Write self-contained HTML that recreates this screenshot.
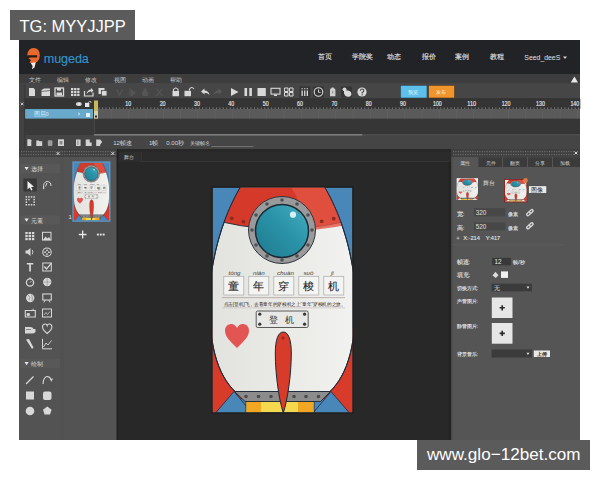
<!DOCTYPE html>
<html><head><meta charset="utf-8">
<style>
*{margin:0;padding:0;box-sizing:border-box}
html,body{width:600px;height:480px;overflow:hidden;background:#fff;font-family:"Liberation Sans",sans-serif}
svg{position:absolute;left:0;top:0}
svg text{font-family:"Liberation Sans",sans-serif}
.lbl{position:absolute;background:#5b5b5b;color:#fff;font-size:16.5px;line-height:30px;white-space:nowrap}
</style></head><body>
<svg width="600" height="480" viewBox="0 0 600 480">
<rect x="19" y="40" width="561" height="400" fill="#262626" />
<rect x="19" y="40" width="561" height="34" fill="#212327" />
<rect x="19" y="74" width="561" height="10" fill="#3d3d3d" />
<rect x="19" y="84" width="561" height="14.5" fill="#464646" />
<rect x="19" y="99" width="561" height="36" fill="#3a3a3a" />
<rect x="25" y="99" width="555" height="10" fill="#363636" />
<rect x="25" y="109" width="68" height="9.5" fill="#5ea0c4" />
<rect x="98" y="109" width="482" height="9.5" fill="#5a5a5a" />
<rect x="19" y="135" width="561" height="14" fill="#454545" />
<rect x="19" y="149" width="98" height="8" fill="#3d3d3d" />
<rect x="451" y="149" width="129" height="8" fill="#3d3d3d" />
<rect x="19" y="157" width="98" height="283" fill="#535353" />
<rect x="60" y="157" width="4" height="283" fill="#515151" />
<rect x="451" y="157" width="129" height="283" fill="#555555" />
<path d="M27.3 56 Q27.5 48 33.6 48 Q39.8 48 39.8 55.5 Q39.8 59 37.5 61.5 Q35.5 63.5 32 63.5 L29.5 62.5 L31 60 L28.5 58.5 L30 57.2 Z" fill="#e8692c"/>
<path d="M27.3 55.2 L37.2 55.2 Q37.6 56.3 36.8 57.4 L27.8 57.4 Z" fill="#2a1a14"/>
<path d="M30.8 63 L35.8 62.2 L34.5 67.5 L32 69.3 L32.6 66 Z" fill="#f2ebe6"/>
<text x="43.8" y="62.6" font-size="12.6" fill="#3493c9" stroke="#3493c9" stroke-width="0.15" textLength="45" lengthAdjust="spacing">mugeda</text>
<text x="318.3" y="59.4" font-size="7" fill="#e2e2e2" stroke="#e2e2e2" stroke-width="0.12">首页</text>
<text x="352.4" y="59.4" font-size="7" fill="#e2e2e2" stroke="#e2e2e2" stroke-width="0.12">学院奖</text>
<text x="387.2" y="59.4" font-size="7" fill="#e2e2e2" stroke="#e2e2e2" stroke-width="0.12">动态</text>
<text x="422" y="59.4" font-size="7" fill="#e2e2e2" stroke="#e2e2e2" stroke-width="0.12">报价</text>
<text x="454.8" y="59.4" font-size="7" fill="#e2e2e2" stroke="#e2e2e2" stroke-width="0.12">案例</text>
<text x="489.6" y="59.4" font-size="7" fill="#e2e2e2" stroke="#e2e2e2" stroke-width="0.12">教程</text>
<text x="524.3" y="59.8" font-size="7.6" fill="#e2e2e2" textLength="36" lengthAdjust="spacingAndGlyphs">Seed_deeS</text>
<path d="M563 56.5 L567 56.5 L565 59 Z" fill="#d6d6d6"/>
<text x="28.5" y="81.5" font-size="6.3" fill="#c8c8c8" >文件</text>
<text x="56.8" y="81.5" font-size="6.3" fill="#c8c8c8" >编辑</text>
<text x="85" y="81.5" font-size="6.3" fill="#c8c8c8" >修改</text>
<text x="113.5" y="81.5" font-size="6.3" fill="#c8c8c8" >视图</text>
<text x="141.8" y="81.5" font-size="6.3" fill="#c8c8c8" >动画</text>
<text x="169.6" y="81.5" font-size="6.3" fill="#c8c8c8" >帮助</text>
<path d="M570.8 82.4 L578 82.4 L574.4 76.6 Z" fill="#e8e8e8"/>
<rect x="19" y="83.5" width="561" height="0.7" fill="#4e4e4e" />
<path d="M29 88 L33.5 88 L35 89.5 L35 96 L29 96 Z" fill="#d9d9d9"/>
<path d="M41.5 90 L44 88.5 L50 88.5 L50 96 L41.5 96 Z" fill="#d9d9d9"/><path d="M41.5 91.5 L50 90.5" stroke="#464646" stroke-width="0.7"/>
<rect x="55" y="88" width="8.5" height="8" fill="none" stroke="#d9d9d9" stroke-width="1.3"/><rect x="57" y="88" width="4" height="2.6" fill="#d9d9d9"/><rect x="56.5" y="92.5" width="5.5" height="3" fill="#d9d9d9"/>
<rect x="71.0" y="88.0" width="2.3" height="2.2" fill="#d9d9d9" />
<rect x="71.0" y="90.9" width="2.3" height="2.2" fill="#d9d9d9" />
<rect x="71.0" y="93.8" width="2.3" height="2.2" fill="#d9d9d9" />
<rect x="74.1" y="88.0" width="2.3" height="2.2" fill="#d9d9d9" />
<rect x="74.1" y="90.9" width="2.3" height="2.2" fill="#d9d9d9" />
<rect x="74.1" y="93.8" width="2.3" height="2.2" fill="#d9d9d9" />
<rect x="77.2" y="88.0" width="2.3" height="2.2" fill="#d9d9d9" />
<rect x="77.2" y="90.9" width="2.3" height="2.2" fill="#d9d9d9" />
<rect x="77.2" y="93.8" width="2.3" height="2.2" fill="#d9d9d9" />
<path d="M84.5 91 L84.5 96 L93 96 L93 92.5" fill="none" stroke="#d9d9d9" stroke-width="1.2"/><path d="M86.5 94 Q87.5 89.5 91 89.5 L91 88 L93.5 90.5 L91 92.8 L91 91.3 Q88.5 91.5 86.5 94 Z" fill="#d9d9d9"/>
<rect x="98.5" y="88" width="6" height="6" fill="#d9d9d9"/><rect x="101.5" y="90.5" width="5.5" height="5.5" fill="#d9d9d9" stroke="#464646" stroke-width="0.8"/>
<path d="M116.5 89 L119.5 95.5 L122.5 89" stroke="#555555" stroke-width="1.2" fill="none"/>
<path d="M130 88 V96 M131.5 90 L135.5 93 L131.5 96 Z" stroke="#555555" stroke-width="1" fill="#555555"/>
<path d="M143.5 88.5 h3 v2 l1.5 2 v3.5 h-6 v-3.5 l1.5 -2 Z" fill="#555555"/>
<path d="M156.5 88.5 L162.5 96 M162.5 88.5 L156.5 96" stroke="#555555" stroke-width="1.2"/>
<path d="M173.5 91 L173.5 89.5 Q175.8 86.5 178 89.5 L178 91" fill="none" stroke="#d9d9d9" stroke-width="1.1"/><rect x="172.5" y="91" width="6.5" height="5.2" fill="#d9d9d9"/>
<path d="M189.5 90.5 L189.5 89 Q191.7 86 194 89" fill="none" stroke="#d9d9d9" stroke-width="1.1"/><rect x="184.5" y="90.8" width="6.5" height="5.4" fill="#d9d9d9"/>
<path d="M201 91.5 L204.5 88.5 L204.5 90.5 Q208.5 90.5 209.5 95 Q207.5 92.8 204.5 92.8 L204.5 94.6 Z" fill="#d9d9d9"/>
<path d="M222 91.5 L218.5 88.5 L218.5 90.5 Q214.5 90.5 213.5 95 Q215.5 92.8 218.5 92.8 L218.5 94.6 Z" fill="#5a5a5a"/>
<path d="M231 88 L238.5 92 L231 96 Z" fill="#d9d9d9"/>
<rect x="244.5" y="88" width="2.6" height="8" fill="#d9d9d9" />
<rect x="249.3" y="88" width="2.6" height="8" fill="#d9d9d9" />
<rect x="257.5" y="88" width="8.3" height="8" fill="#d9d9d9" />
<rect x="271" y="88.3" width="9" height="5.8" fill="none" stroke="#d9d9d9" stroke-width="1.1"/><rect x="274" y="94.6" width="3" height="1.4" fill="#d9d9d9"/>
<path d="M284.5 88 h3.5 v3.5 h-3.5 Z M289.5 88 h3.5 v3.5 h-3.5 Z M284.5 92.5 h3.5 v3.5 h-3.5 Z M289.5 92.5 h3.5 v3.5 h-3.5 Z" fill="none" stroke="#d9d9d9" stroke-width="1"/>
<rect x="299.5" y="86.5" width="11" height="11" fill="#353535" />
<rect x="313" y="86.5" width="11" height="11" fill="#353535" />
<rect x="341" y="86.5" width="11" height="11" fill="#353535" />
<rect x="301.5" y="90.5" width="1.3" height="5.5" fill="#d9d9d9" />
<rect x="301.5" y="88.2" width="1.3" height="1.1" fill="#d9d9d9" />
<rect x="304.1" y="90.5" width="1.3" height="5.5" fill="#d9d9d9" />
<rect x="304.1" y="88.2" width="1.3" height="1.1" fill="#d9d9d9" />
<rect x="306.7" y="90.5" width="1.3" height="5.5" fill="#d9d9d9" />
<rect x="306.7" y="88.2" width="1.3" height="1.1" fill="#d9d9d9" />
<circle cx="318.5" cy="92" r="4.3" fill="none" stroke="#d9d9d9" stroke-width="1.1"/><path d="M318.5 89.5 V92.3 H320.7" fill="none" stroke="#d9d9d9" stroke-width="0.9"/>
<path d="M330 90 Q330 88.6 331.4 88.3 L331.6 87.4 L333.6 87.4 L333.8 88.3 Q335.4 88.6 335.4 90 L335.4 96.3 L330 96.3 Z" fill="#cfcfcf"/><rect x="332.2" y="91" width="1" height="2.5" fill="#888"/>
<circle cx="344.5" cy="89.3" r="1.9" fill="#d9d9d9"/><path d="M344 91 Q346 89.5 349 90.8 Q352 92.3 351.3 95 Q350.3 97.2 347.5 96.8 Q344.8 96.3 344 93.5 Z" fill="#d9d9d9"/>
<circle cx="362" cy="92" r="4.6" fill="#d9d9d9"/><path d="M360.3 90.8 Q360.5 89 362 89 Q363.8 89 363.7 90.8 Q363.5 91.8 362.2 92.5 L362.2 93.5" fill="none" stroke="#464646" stroke-width="1.1"/><rect x="361.6" y="94.2" width="1.2" height="1.2" fill="#464646"/>
<rect x="400.5" y="85.3" width="26.5" height="12.7" fill="#5cc0ea" stroke="#2c3e4c" stroke-width="0.6"/>
<rect x="428.6" y="85.3" width="26" height="12.7" fill="#f0952c" stroke="#4a3420" stroke-width="0.6"/>
<text x="408.3" y="94" font-size="5.2" fill="#e8f6fc" >预览</text>
<text x="436.3" y="94" font-size="5.2" fill="#fdeede" >发布</text>
<rect x="19" y="84" width="5.5" height="65" fill="#424242" />
<rect x="24.5" y="84" width="0.8" height="65" fill="#333333" />
<path d="M20.8 102.6 L23.4 105.2 M23.4 102.6 L20.8 105.2" stroke="#e0e0e0" stroke-width="0.9"/>
<rect x="25.3" y="99" width="555" height="10" fill="#343434" />
<ellipse cx="78.8" cy="104" rx="3" ry="2.1" fill="#c8c8c8"/><ellipse cx="79.2" cy="104" rx="1.4" ry="1.3" fill="#e8e8e8"/>
<rect x="85" y="102.8" width="4.3" height="4.2" fill="#e6e6e6"/><path d="M88.6 102.8 V102 Q89.8 100.6 91 101.8 V103" fill="none" stroke="#cfcfcf" stroke-width="0.8"/>
<rect x="25.3" y="118.5" width="68.7" height="16.5" fill="#393939" />
<rect x="94" y="118.5" width="486" height="16.5" fill="#363636" />
<rect x="94" y="118.5" width="0.8" height="16.5" fill="#4a4a4a" />
<rect x="94" y="134" width="268.5" height="1.6" fill="#7c7c7c" />
<rect x="362.5" y="134" width="217.5" height="1.6" fill="#4c4c4c" />
<rect x="25.3" y="109.5" width="67.7" height="9" fill="#68a9cc" />
<text x="33.5" y="116" font-size="5.6" fill="#dcecf5" >图层0</text>
<path d="M78 112.8 L80 114 L78 115.2" fill="none" stroke="#cfe6f2" stroke-width="0.8"/>
<rect x="86" y="113" width="4" height="4" fill="#e4f2fa" />
<rect x="98" y="109" width="482" height="9.5" fill="#5a5a5a" />
<rect x="111.25" y="109" width="0.6" height="9.5" fill="#646464" />
<rect x="128.5" y="109" width="0.6" height="9.5" fill="#646464" />
<rect x="145.75" y="109" width="0.6" height="9.5" fill="#646464" />
<rect x="163.0" y="109" width="0.6" height="9.5" fill="#646464" />
<rect x="180.25" y="109" width="0.6" height="9.5" fill="#646464" />
<rect x="197.5" y="109" width="0.6" height="9.5" fill="#646464" />
<rect x="214.75" y="109" width="0.6" height="9.5" fill="#646464" />
<rect x="232.0" y="109" width="0.6" height="9.5" fill="#646464" />
<rect x="249.25" y="109" width="0.6" height="9.5" fill="#646464" />
<rect x="266.5" y="109" width="0.6" height="9.5" fill="#646464" />
<rect x="283.75" y="109" width="0.6" height="9.5" fill="#646464" />
<rect x="301.0" y="109" width="0.6" height="9.5" fill="#646464" />
<rect x="318.25" y="109" width="0.6" height="9.5" fill="#646464" />
<rect x="335.5" y="109" width="0.6" height="9.5" fill="#646464" />
<rect x="352.75" y="109" width="0.6" height="9.5" fill="#646464" />
<rect x="370.0" y="109" width="0.6" height="9.5" fill="#646464" />
<rect x="387.25" y="109" width="0.6" height="9.5" fill="#646464" />
<rect x="404.5" y="109" width="0.6" height="9.5" fill="#646464" />
<rect x="421.75" y="109" width="0.6" height="9.5" fill="#646464" />
<rect x="439.0" y="109" width="0.6" height="9.5" fill="#646464" />
<rect x="456.25" y="109" width="0.6" height="9.5" fill="#646464" />
<rect x="473.5" y="109" width="0.6" height="9.5" fill="#646464" />
<rect x="490.75" y="109" width="0.6" height="9.5" fill="#646464" />
<rect x="508.0" y="109" width="0.6" height="9.5" fill="#646464" />
<rect x="525.25" y="109" width="0.6" height="9.5" fill="#646464" />
<rect x="542.5" y="109" width="0.6" height="9.5" fill="#646464" />
<rect x="559.75" y="109" width="0.6" height="9.5" fill="#646464" />
<rect x="577.0" y="109" width="0.6" height="9.5" fill="#646464" />
<rect x="95.2" y="107.6" width="1" height="1.1" fill="#9a9a9a" />
<rect x="98.65" y="107.6" width="1" height="1.1" fill="#9a9a9a" />
<rect x="102.1" y="107.6" width="1" height="1.1" fill="#9a9a9a" />
<rect x="105.55" y="107.6" width="1" height="1.1" fill="#9a9a9a" />
<rect x="109.0" y="107.6" width="1" height="1.1" fill="#9a9a9a" />
<rect x="112.45" y="107.6" width="1" height="1.1" fill="#9a9a9a" />
<rect x="115.9" y="107.6" width="1" height="1.1" fill="#9a9a9a" />
<rect x="119.35" y="107.6" width="1" height="1.1" fill="#9a9a9a" />
<rect x="122.8" y="107.6" width="1" height="1.1" fill="#9a9a9a" />
<rect x="126.25" y="107.6" width="1" height="1.1" fill="#9a9a9a" />
<rect x="129.7" y="107.6" width="1" height="1.1" fill="#9a9a9a" />
<rect x="133.15" y="107.6" width="1" height="1.1" fill="#9a9a9a" />
<rect x="136.6" y="107.6" width="1" height="1.1" fill="#9a9a9a" />
<rect x="140.05" y="107.6" width="1" height="1.1" fill="#9a9a9a" />
<rect x="143.5" y="107.6" width="1" height="1.1" fill="#9a9a9a" />
<rect x="146.95" y="107.6" width="1" height="1.1" fill="#9a9a9a" />
<rect x="150.4" y="107.6" width="1" height="1.1" fill="#9a9a9a" />
<rect x="153.85" y="107.6" width="1" height="1.1" fill="#9a9a9a" />
<rect x="157.3" y="107.6" width="1" height="1.1" fill="#9a9a9a" />
<rect x="160.75" y="107.6" width="1" height="1.1" fill="#9a9a9a" />
<rect x="164.2" y="107.6" width="1" height="1.1" fill="#9a9a9a" />
<rect x="167.65" y="107.6" width="1" height="1.1" fill="#9a9a9a" />
<rect x="171.1" y="107.6" width="1" height="1.1" fill="#9a9a9a" />
<rect x="174.55" y="107.6" width="1" height="1.1" fill="#9a9a9a" />
<rect x="178.0" y="107.6" width="1" height="1.1" fill="#9a9a9a" />
<rect x="181.45" y="107.6" width="1" height="1.1" fill="#9a9a9a" />
<rect x="184.9" y="107.6" width="1" height="1.1" fill="#9a9a9a" />
<rect x="188.35" y="107.6" width="1" height="1.1" fill="#9a9a9a" />
<rect x="191.8" y="107.6" width="1" height="1.1" fill="#9a9a9a" />
<rect x="195.25" y="107.6" width="1" height="1.1" fill="#9a9a9a" />
<rect x="198.7" y="107.6" width="1" height="1.1" fill="#9a9a9a" />
<rect x="202.15" y="107.6" width="1" height="1.1" fill="#9a9a9a" />
<rect x="205.6" y="107.6" width="1" height="1.1" fill="#9a9a9a" />
<rect x="209.05" y="107.6" width="1" height="1.1" fill="#9a9a9a" />
<rect x="212.5" y="107.6" width="1" height="1.1" fill="#9a9a9a" />
<rect x="215.95" y="107.6" width="1" height="1.1" fill="#9a9a9a" />
<rect x="219.4" y="107.6" width="1" height="1.1" fill="#9a9a9a" />
<rect x="222.85" y="107.6" width="1" height="1.1" fill="#9a9a9a" />
<rect x="226.3" y="107.6" width="1" height="1.1" fill="#9a9a9a" />
<rect x="229.75" y="107.6" width="1" height="1.1" fill="#9a9a9a" />
<rect x="233.2" y="107.6" width="1" height="1.1" fill="#9a9a9a" />
<rect x="236.65" y="107.6" width="1" height="1.1" fill="#9a9a9a" />
<rect x="240.1" y="107.6" width="1" height="1.1" fill="#9a9a9a" />
<rect x="243.55" y="107.6" width="1" height="1.1" fill="#9a9a9a" />
<rect x="247.0" y="107.6" width="1" height="1.1" fill="#9a9a9a" />
<rect x="250.45" y="107.6" width="1" height="1.1" fill="#9a9a9a" />
<rect x="253.9" y="107.6" width="1" height="1.1" fill="#9a9a9a" />
<rect x="257.35" y="107.6" width="1" height="1.1" fill="#9a9a9a" />
<rect x="260.8" y="107.6" width="1" height="1.1" fill="#9a9a9a" />
<rect x="264.25" y="107.6" width="1" height="1.1" fill="#9a9a9a" />
<rect x="267.7" y="107.6" width="1" height="1.1" fill="#9a9a9a" />
<rect x="271.15" y="107.6" width="1" height="1.1" fill="#9a9a9a" />
<rect x="274.6" y="107.6" width="1" height="1.1" fill="#9a9a9a" />
<rect x="278.05" y="107.6" width="1" height="1.1" fill="#9a9a9a" />
<rect x="281.5" y="107.6" width="1" height="1.1" fill="#9a9a9a" />
<rect x="284.95" y="107.6" width="1" height="1.1" fill="#9a9a9a" />
<rect x="288.4" y="107.6" width="1" height="1.1" fill="#9a9a9a" />
<rect x="291.85" y="107.6" width="1" height="1.1" fill="#9a9a9a" />
<rect x="295.3" y="107.6" width="1" height="1.1" fill="#9a9a9a" />
<rect x="298.75" y="107.6" width="1" height="1.1" fill="#9a9a9a" />
<rect x="302.2" y="107.6" width="1" height="1.1" fill="#9a9a9a" />
<rect x="305.65" y="107.6" width="1" height="1.1" fill="#9a9a9a" />
<rect x="309.1" y="107.6" width="1" height="1.1" fill="#9a9a9a" />
<rect x="312.55" y="107.6" width="1" height="1.1" fill="#9a9a9a" />
<rect x="316.0" y="107.6" width="1" height="1.1" fill="#9a9a9a" />
<rect x="319.45" y="107.6" width="1" height="1.1" fill="#9a9a9a" />
<rect x="322.9" y="107.6" width="1" height="1.1" fill="#9a9a9a" />
<rect x="326.35" y="107.6" width="1" height="1.1" fill="#9a9a9a" />
<rect x="329.8" y="107.6" width="1" height="1.1" fill="#9a9a9a" />
<rect x="333.25" y="107.6" width="1" height="1.1" fill="#9a9a9a" />
<rect x="336.7" y="107.6" width="1" height="1.1" fill="#9a9a9a" />
<rect x="340.15" y="107.6" width="1" height="1.1" fill="#9a9a9a" />
<rect x="343.6" y="107.6" width="1" height="1.1" fill="#9a9a9a" />
<rect x="347.05" y="107.6" width="1" height="1.1" fill="#9a9a9a" />
<rect x="350.5" y="107.6" width="1" height="1.1" fill="#9a9a9a" />
<rect x="353.95" y="107.6" width="1" height="1.1" fill="#9a9a9a" />
<rect x="357.4" y="107.6" width="1" height="1.1" fill="#9a9a9a" />
<rect x="360.85" y="107.6" width="1" height="1.1" fill="#9a9a9a" />
<rect x="364.3" y="107.6" width="1" height="1.1" fill="#9a9a9a" />
<rect x="367.75" y="107.6" width="1" height="1.1" fill="#9a9a9a" />
<rect x="371.2" y="107.6" width="1" height="1.1" fill="#9a9a9a" />
<rect x="374.65" y="107.6" width="1" height="1.1" fill="#9a9a9a" />
<rect x="378.1" y="107.6" width="1" height="1.1" fill="#9a9a9a" />
<rect x="381.55" y="107.6" width="1" height="1.1" fill="#9a9a9a" />
<rect x="385.0" y="107.6" width="1" height="1.1" fill="#9a9a9a" />
<rect x="388.45" y="107.6" width="1" height="1.1" fill="#9a9a9a" />
<rect x="391.9" y="107.6" width="1" height="1.1" fill="#9a9a9a" />
<rect x="395.35" y="107.6" width="1" height="1.1" fill="#9a9a9a" />
<rect x="398.8" y="107.6" width="1" height="1.1" fill="#9a9a9a" />
<rect x="402.25" y="107.6" width="1" height="1.1" fill="#9a9a9a" />
<rect x="405.7" y="107.6" width="1" height="1.1" fill="#9a9a9a" />
<rect x="409.15" y="107.6" width="1" height="1.1" fill="#9a9a9a" />
<rect x="412.6" y="107.6" width="1" height="1.1" fill="#9a9a9a" />
<rect x="416.05" y="107.6" width="1" height="1.1" fill="#9a9a9a" />
<rect x="419.5" y="107.6" width="1" height="1.1" fill="#9a9a9a" />
<rect x="422.95" y="107.6" width="1" height="1.1" fill="#9a9a9a" />
<rect x="426.4" y="107.6" width="1" height="1.1" fill="#9a9a9a" />
<rect x="429.85" y="107.6" width="1" height="1.1" fill="#9a9a9a" />
<rect x="433.3" y="107.6" width="1" height="1.1" fill="#9a9a9a" />
<rect x="436.75" y="107.6" width="1" height="1.1" fill="#9a9a9a" />
<rect x="440.2" y="107.6" width="1" height="1.1" fill="#9a9a9a" />
<rect x="443.65" y="107.6" width="1" height="1.1" fill="#9a9a9a" />
<rect x="447.1" y="107.6" width="1" height="1.1" fill="#9a9a9a" />
<rect x="450.55" y="107.6" width="1" height="1.1" fill="#9a9a9a" />
<rect x="454.0" y="107.6" width="1" height="1.1" fill="#9a9a9a" />
<rect x="457.45" y="107.6" width="1" height="1.1" fill="#9a9a9a" />
<rect x="460.9" y="107.6" width="1" height="1.1" fill="#9a9a9a" />
<rect x="464.35" y="107.6" width="1" height="1.1" fill="#9a9a9a" />
<rect x="467.8" y="107.6" width="1" height="1.1" fill="#9a9a9a" />
<rect x="471.25" y="107.6" width="1" height="1.1" fill="#9a9a9a" />
<rect x="474.7" y="107.6" width="1" height="1.1" fill="#9a9a9a" />
<rect x="478.15" y="107.6" width="1" height="1.1" fill="#9a9a9a" />
<rect x="481.6" y="107.6" width="1" height="1.1" fill="#9a9a9a" />
<rect x="485.05" y="107.6" width="1" height="1.1" fill="#9a9a9a" />
<rect x="488.5" y="107.6" width="1" height="1.1" fill="#9a9a9a" />
<rect x="491.95" y="107.6" width="1" height="1.1" fill="#9a9a9a" />
<rect x="495.4" y="107.6" width="1" height="1.1" fill="#9a9a9a" />
<rect x="498.85" y="107.6" width="1" height="1.1" fill="#9a9a9a" />
<rect x="502.3" y="107.6" width="1" height="1.1" fill="#9a9a9a" />
<rect x="505.75" y="107.6" width="1" height="1.1" fill="#9a9a9a" />
<rect x="509.2" y="107.6" width="1" height="1.1" fill="#9a9a9a" />
<rect x="512.65" y="107.6" width="1" height="1.1" fill="#9a9a9a" />
<rect x="516.1" y="107.6" width="1" height="1.1" fill="#9a9a9a" />
<rect x="519.55" y="107.6" width="1" height="1.1" fill="#9a9a9a" />
<rect x="523.0" y="107.6" width="1" height="1.1" fill="#9a9a9a" />
<rect x="526.45" y="107.6" width="1" height="1.1" fill="#9a9a9a" />
<rect x="529.9" y="107.6" width="1" height="1.1" fill="#9a9a9a" />
<rect x="533.35" y="107.6" width="1" height="1.1" fill="#9a9a9a" />
<rect x="536.8" y="107.6" width="1" height="1.1" fill="#9a9a9a" />
<rect x="540.25" y="107.6" width="1" height="1.1" fill="#9a9a9a" />
<rect x="543.7" y="107.6" width="1" height="1.1" fill="#9a9a9a" />
<rect x="547.15" y="107.6" width="1" height="1.1" fill="#9a9a9a" />
<rect x="550.6" y="107.6" width="1" height="1.1" fill="#9a9a9a" />
<rect x="554.05" y="107.6" width="1" height="1.1" fill="#9a9a9a" />
<rect x="557.5" y="107.6" width="1" height="1.1" fill="#9a9a9a" />
<rect x="560.95" y="107.6" width="1" height="1.1" fill="#9a9a9a" />
<rect x="564.4" y="107.6" width="1" height="1.1" fill="#9a9a9a" />
<rect x="567.85" y="107.6" width="1" height="1.1" fill="#9a9a9a" />
<rect x="571.3" y="107.6" width="1" height="1.1" fill="#9a9a9a" />
<rect x="574.75" y="107.6" width="1" height="1.1" fill="#9a9a9a" />
<rect x="578.2" y="107.6" width="1" height="1.1" fill="#9a9a9a" />
<text x="128.25" y="106.4" font-size="6.6" fill="#e8e8e8" stroke="#e8e8e8" stroke-width="0.15" text-anchor="middle" textLength="5.9" lengthAdjust="spacingAndGlyphs">10</text>
<text x="162.6" y="106.4" font-size="6.6" fill="#e8e8e8" stroke="#e8e8e8" stroke-width="0.15" text-anchor="middle" textLength="5.9" lengthAdjust="spacingAndGlyphs">20</text>
<text x="196.95" y="106.4" font-size="6.6" fill="#e8e8e8" stroke="#e8e8e8" stroke-width="0.15" text-anchor="middle" textLength="5.9" lengthAdjust="spacingAndGlyphs">30</text>
<text x="231.3" y="106.4" font-size="6.6" fill="#e8e8e8" stroke="#e8e8e8" stroke-width="0.15" text-anchor="middle" textLength="5.9" lengthAdjust="spacingAndGlyphs">40</text>
<text x="265.65" y="106.4" font-size="6.6" fill="#e8e8e8" stroke="#e8e8e8" stroke-width="0.15" text-anchor="middle" textLength="5.9" lengthAdjust="spacingAndGlyphs">50</text>
<text x="300.0" y="106.4" font-size="6.6" fill="#e8e8e8" stroke="#e8e8e8" stroke-width="0.15" text-anchor="middle" textLength="5.9" lengthAdjust="spacingAndGlyphs">60</text>
<text x="334.35" y="106.4" font-size="6.6" fill="#e8e8e8" stroke="#e8e8e8" stroke-width="0.15" text-anchor="middle" textLength="5.9" lengthAdjust="spacingAndGlyphs">70</text>
<text x="368.7" y="106.4" font-size="6.6" fill="#e8e8e8" stroke="#e8e8e8" stroke-width="0.15" text-anchor="middle" textLength="5.9" lengthAdjust="spacingAndGlyphs">80</text>
<text x="403.05" y="106.4" font-size="6.6" fill="#e8e8e8" stroke="#e8e8e8" stroke-width="0.15" text-anchor="middle" textLength="5.9" lengthAdjust="spacingAndGlyphs">90</text>
<text x="437.4" y="106.4" font-size="6.6" fill="#e8e8e8" stroke="#e8e8e8" stroke-width="0.15" text-anchor="middle" textLength="8.850000000000001" lengthAdjust="spacingAndGlyphs">100</text>
<text x="471.75" y="106.4" font-size="6.6" fill="#e8e8e8" stroke="#e8e8e8" stroke-width="0.15" text-anchor="middle" textLength="8.850000000000001" lengthAdjust="spacingAndGlyphs">110</text>
<text x="506.1" y="106.4" font-size="6.6" fill="#e8e8e8" stroke="#e8e8e8" stroke-width="0.15" text-anchor="middle" textLength="8.850000000000001" lengthAdjust="spacingAndGlyphs">120</text>
<text x="540.45" y="106.4" font-size="6.6" fill="#e8e8e8" stroke="#e8e8e8" stroke-width="0.15" text-anchor="middle" textLength="8.850000000000001" lengthAdjust="spacingAndGlyphs">130</text>
<text x="574.8" y="106.4" font-size="6.6" fill="#e8e8e8" stroke="#e8e8e8" stroke-width="0.15" text-anchor="middle" textLength="8.850000000000001" lengthAdjust="spacingAndGlyphs">140</text>
<rect x="94" y="100.5" width="4" height="18" fill="#cbb65c" />
<rect x="94" y="111" width="4" height="7.5" fill="#d6cfa8" />
<rect x="95" y="115.5" width="2" height="2" fill="#2a2a2a" />
<path d="M27.3 139.3 h3 l1 1 v5.8 h-4 Z" fill="#d2d2d2"/>
<path d="M36.3 140.5 h2.5 l0.8 0.8 h2.6 v4.7 h-5.9 Z" fill="#d2d2d2"/>
<rect x="47.8" y="140.3" width="4.6" height="5.7" rx="1" fill="#9c9c9c"/>
<rect x="58" y="139.3" width="6" height="6.7" fill="#d2d2d2"/><rect x="59.5" y="141" width="3" height="3.5" fill="#8a8a8a"/>
<rect x="76" y="139.5" width="4.6" height="6.5" fill="#d2d2d2"/><rect x="77.6" y="140.5" width="0.7" height="4.5" fill="#666"/>
<path d="M85.7 139.5 h4 v3 h2 v3.5 h-6 Z" fill="#d2d2d2"/>
<path d="M96.2 139.5 h4 l2 2.5 l-2 2.5 v1.5 h-4 Z" fill="#d2d2d2"/>
<text x="113.2" y="145.4" font-size="6" fill="#d4d4d4" >12帧速</text>
<text x="149" y="145.4" font-size="6" fill="#d4d4d4" >1帧</text>
<text x="166.3" y="145.4" font-size="6" fill="#d4d4d4" >0.00秒</text>
<text x="190" y="145.3" font-size="5.4" fill="#d4d4d4" >关键帧名</text>
<rect x="211.5" y="146" width="42" height="0.8" fill="#7e7e7e" />
<rect x="19" y="149.5" width="97" height="7.5" fill="#414141" />
<rect x="452.6" y="149.5" width="127.4" height="7.5" fill="#414141" />
<rect x="21" y="151" width="1.1" height="1.2" fill="#6c6c6c" />
<rect x="23.4" y="151" width="1.1" height="1.2" fill="#6c6c6c" />
<rect x="25.8" y="151" width="1.1" height="1.2" fill="#6c6c6c" />
<rect x="28.2" y="151" width="1.1" height="1.2" fill="#6c6c6c" />
<rect x="30.6" y="151" width="1.1" height="1.2" fill="#6c6c6c" />
<rect x="33.0" y="151" width="1.1" height="1.2" fill="#6c6c6c" />
<rect x="35.4" y="151" width="1.1" height="1.2" fill="#6c6c6c" />
<rect x="37.8" y="151" width="1.1" height="1.2" fill="#6c6c6c" />
<rect x="40.2" y="151" width="1.1" height="1.2" fill="#6c6c6c" />
<rect x="42.6" y="151" width="1.1" height="1.2" fill="#6c6c6c" />
<rect x="45.0" y="151" width="1.1" height="1.2" fill="#6c6c6c" />
<rect x="47.4" y="151" width="1.1" height="1.2" fill="#6c6c6c" />
<rect x="49.8" y="151" width="1.1" height="1.2" fill="#6c6c6c" />
<rect x="52.2" y="151" width="1.1" height="1.2" fill="#6c6c6c" />
<rect x="54.6" y="151" width="1.1" height="1.2" fill="#6c6c6c" />
<rect x="57.0" y="151" width="1.1" height="1.2" fill="#6c6c6c" />
<rect x="59.4" y="151" width="1.1" height="1.2" fill="#6c6c6c" />
<rect x="61.8" y="151" width="1.1" height="1.2" fill="#6c6c6c" />
<rect x="64.2" y="151" width="1.1" height="1.2" fill="#6c6c6c" />
<rect x="66.6" y="151" width="1.1" height="1.2" fill="#6c6c6c" />
<rect x="69.0" y="151" width="1.1" height="1.2" fill="#6c6c6c" />
<rect x="71.4" y="151" width="1.1" height="1.2" fill="#6c6c6c" />
<rect x="73.8" y="151" width="1.1" height="1.2" fill="#6c6c6c" />
<rect x="76.2" y="151" width="1.1" height="1.2" fill="#6c6c6c" />
<rect x="78.6" y="151" width="1.1" height="1.2" fill="#6c6c6c" />
<rect x="81.0" y="151" width="1.1" height="1.2" fill="#6c6c6c" />
<rect x="83.4" y="151" width="1.1" height="1.2" fill="#6c6c6c" />
<rect x="85.8" y="151" width="1.1" height="1.2" fill="#6c6c6c" />
<rect x="88.2" y="151" width="1.1" height="1.2" fill="#6c6c6c" />
<rect x="90.6" y="151" width="1.1" height="1.2" fill="#6c6c6c" />
<rect x="93.0" y="151" width="1.1" height="1.2" fill="#6c6c6c" />
<rect x="95.4" y="151" width="1.1" height="1.2" fill="#6c6c6c" />
<rect x="97.8" y="151" width="1.1" height="1.2" fill="#6c6c6c" />
<rect x="100.2" y="151" width="1.1" height="1.2" fill="#6c6c6c" />
<rect x="102.6" y="151" width="1.1" height="1.2" fill="#6c6c6c" />
<rect x="105.0" y="151" width="1.1" height="1.2" fill="#6c6c6c" />
<rect x="107.4" y="151" width="1.1" height="1.2" fill="#6c6c6c" />
<rect x="109.8" y="151" width="1.1" height="1.2" fill="#6c6c6c" />
<rect x="112.2" y="151" width="1.1" height="1.2" fill="#6c6c6c" />
<rect x="114.6" y="151" width="1.1" height="1.2" fill="#6c6c6c" />
<rect x="21" y="154" width="1.1" height="1.2" fill="#6c6c6c" />
<rect x="23.4" y="154" width="1.1" height="1.2" fill="#6c6c6c" />
<rect x="25.8" y="154" width="1.1" height="1.2" fill="#6c6c6c" />
<rect x="28.2" y="154" width="1.1" height="1.2" fill="#6c6c6c" />
<rect x="30.6" y="154" width="1.1" height="1.2" fill="#6c6c6c" />
<rect x="33.0" y="154" width="1.1" height="1.2" fill="#6c6c6c" />
<rect x="35.4" y="154" width="1.1" height="1.2" fill="#6c6c6c" />
<rect x="37.8" y="154" width="1.1" height="1.2" fill="#6c6c6c" />
<rect x="40.2" y="154" width="1.1" height="1.2" fill="#6c6c6c" />
<rect x="42.6" y="154" width="1.1" height="1.2" fill="#6c6c6c" />
<rect x="45.0" y="154" width="1.1" height="1.2" fill="#6c6c6c" />
<rect x="47.4" y="154" width="1.1" height="1.2" fill="#6c6c6c" />
<rect x="49.8" y="154" width="1.1" height="1.2" fill="#6c6c6c" />
<rect x="52.2" y="154" width="1.1" height="1.2" fill="#6c6c6c" />
<rect x="54.6" y="154" width="1.1" height="1.2" fill="#6c6c6c" />
<rect x="57.0" y="154" width="1.1" height="1.2" fill="#6c6c6c" />
<rect x="59.4" y="154" width="1.1" height="1.2" fill="#6c6c6c" />
<rect x="61.8" y="154" width="1.1" height="1.2" fill="#6c6c6c" />
<rect x="64.2" y="154" width="1.1" height="1.2" fill="#6c6c6c" />
<rect x="66.6" y="154" width="1.1" height="1.2" fill="#6c6c6c" />
<rect x="69.0" y="154" width="1.1" height="1.2" fill="#6c6c6c" />
<rect x="71.4" y="154" width="1.1" height="1.2" fill="#6c6c6c" />
<rect x="73.8" y="154" width="1.1" height="1.2" fill="#6c6c6c" />
<rect x="76.2" y="154" width="1.1" height="1.2" fill="#6c6c6c" />
<rect x="78.6" y="154" width="1.1" height="1.2" fill="#6c6c6c" />
<rect x="81.0" y="154" width="1.1" height="1.2" fill="#6c6c6c" />
<rect x="83.4" y="154" width="1.1" height="1.2" fill="#6c6c6c" />
<rect x="85.8" y="154" width="1.1" height="1.2" fill="#6c6c6c" />
<rect x="88.2" y="154" width="1.1" height="1.2" fill="#6c6c6c" />
<rect x="90.6" y="154" width="1.1" height="1.2" fill="#6c6c6c" />
<rect x="93.0" y="154" width="1.1" height="1.2" fill="#6c6c6c" />
<rect x="95.4" y="154" width="1.1" height="1.2" fill="#6c6c6c" />
<rect x="97.8" y="154" width="1.1" height="1.2" fill="#6c6c6c" />
<rect x="100.2" y="154" width="1.1" height="1.2" fill="#6c6c6c" />
<rect x="102.6" y="154" width="1.1" height="1.2" fill="#6c6c6c" />
<rect x="105.0" y="154" width="1.1" height="1.2" fill="#6c6c6c" />
<rect x="107.4" y="154" width="1.1" height="1.2" fill="#6c6c6c" />
<rect x="109.8" y="154" width="1.1" height="1.2" fill="#6c6c6c" />
<rect x="112.2" y="154" width="1.1" height="1.2" fill="#6c6c6c" />
<rect x="114.6" y="154" width="1.1" height="1.2" fill="#6c6c6c" />
<rect x="453" y="151" width="1.1" height="1.2" fill="#6c6c6c" />
<rect x="455.4" y="151" width="1.1" height="1.2" fill="#6c6c6c" />
<rect x="457.8" y="151" width="1.1" height="1.2" fill="#6c6c6c" />
<rect x="460.2" y="151" width="1.1" height="1.2" fill="#6c6c6c" />
<rect x="462.6" y="151" width="1.1" height="1.2" fill="#6c6c6c" />
<rect x="465.0" y="151" width="1.1" height="1.2" fill="#6c6c6c" />
<rect x="467.4" y="151" width="1.1" height="1.2" fill="#6c6c6c" />
<rect x="469.8" y="151" width="1.1" height="1.2" fill="#6c6c6c" />
<rect x="472.2" y="151" width="1.1" height="1.2" fill="#6c6c6c" />
<rect x="474.6" y="151" width="1.1" height="1.2" fill="#6c6c6c" />
<rect x="477.0" y="151" width="1.1" height="1.2" fill="#6c6c6c" />
<rect x="479.4" y="151" width="1.1" height="1.2" fill="#6c6c6c" />
<rect x="481.8" y="151" width="1.1" height="1.2" fill="#6c6c6c" />
<rect x="484.2" y="151" width="1.1" height="1.2" fill="#6c6c6c" />
<rect x="486.6" y="151" width="1.1" height="1.2" fill="#6c6c6c" />
<rect x="489.0" y="151" width="1.1" height="1.2" fill="#6c6c6c" />
<rect x="491.4" y="151" width="1.1" height="1.2" fill="#6c6c6c" />
<rect x="493.8" y="151" width="1.1" height="1.2" fill="#6c6c6c" />
<rect x="496.2" y="151" width="1.1" height="1.2" fill="#6c6c6c" />
<rect x="498.6" y="151" width="1.1" height="1.2" fill="#6c6c6c" />
<rect x="501.0" y="151" width="1.1" height="1.2" fill="#6c6c6c" />
<rect x="503.4" y="151" width="1.1" height="1.2" fill="#6c6c6c" />
<rect x="505.8" y="151" width="1.1" height="1.2" fill="#6c6c6c" />
<rect x="508.2" y="151" width="1.1" height="1.2" fill="#6c6c6c" />
<rect x="510.6" y="151" width="1.1" height="1.2" fill="#6c6c6c" />
<rect x="513.0" y="151" width="1.1" height="1.2" fill="#6c6c6c" />
<rect x="515.4" y="151" width="1.1" height="1.2" fill="#6c6c6c" />
<rect x="517.8" y="151" width="1.1" height="1.2" fill="#6c6c6c" />
<rect x="520.2" y="151" width="1.1" height="1.2" fill="#6c6c6c" />
<rect x="522.6" y="151" width="1.1" height="1.2" fill="#6c6c6c" />
<rect x="525.0" y="151" width="1.1" height="1.2" fill="#6c6c6c" />
<rect x="527.4" y="151" width="1.1" height="1.2" fill="#6c6c6c" />
<rect x="529.8" y="151" width="1.1" height="1.2" fill="#6c6c6c" />
<rect x="532.2" y="151" width="1.1" height="1.2" fill="#6c6c6c" />
<rect x="534.6" y="151" width="1.1" height="1.2" fill="#6c6c6c" />
<rect x="537.0" y="151" width="1.1" height="1.2" fill="#6c6c6c" />
<rect x="539.4" y="151" width="1.1" height="1.2" fill="#6c6c6c" />
<rect x="541.8" y="151" width="1.1" height="1.2" fill="#6c6c6c" />
<rect x="544.2" y="151" width="1.1" height="1.2" fill="#6c6c6c" />
<rect x="546.6" y="151" width="1.1" height="1.2" fill="#6c6c6c" />
<rect x="549.0" y="151" width="1.1" height="1.2" fill="#6c6c6c" />
<rect x="551.4" y="151" width="1.1" height="1.2" fill="#6c6c6c" />
<rect x="553.8" y="151" width="1.1" height="1.2" fill="#6c6c6c" />
<rect x="556.2" y="151" width="1.1" height="1.2" fill="#6c6c6c" />
<rect x="558.6" y="151" width="1.1" height="1.2" fill="#6c6c6c" />
<rect x="561.0" y="151" width="1.1" height="1.2" fill="#6c6c6c" />
<rect x="563.4" y="151" width="1.1" height="1.2" fill="#6c6c6c" />
<rect x="565.8" y="151" width="1.1" height="1.2" fill="#6c6c6c" />
<rect x="568.2" y="151" width="1.1" height="1.2" fill="#6c6c6c" />
<rect x="570.6" y="151" width="1.1" height="1.2" fill="#6c6c6c" />
<rect x="573.0" y="151" width="1.1" height="1.2" fill="#6c6c6c" />
<rect x="453" y="154" width="1.1" height="1.2" fill="#6c6c6c" />
<rect x="455.4" y="154" width="1.1" height="1.2" fill="#6c6c6c" />
<rect x="457.8" y="154" width="1.1" height="1.2" fill="#6c6c6c" />
<rect x="460.2" y="154" width="1.1" height="1.2" fill="#6c6c6c" />
<rect x="462.6" y="154" width="1.1" height="1.2" fill="#6c6c6c" />
<rect x="465.0" y="154" width="1.1" height="1.2" fill="#6c6c6c" />
<rect x="467.4" y="154" width="1.1" height="1.2" fill="#6c6c6c" />
<rect x="469.8" y="154" width="1.1" height="1.2" fill="#6c6c6c" />
<rect x="472.2" y="154" width="1.1" height="1.2" fill="#6c6c6c" />
<rect x="474.6" y="154" width="1.1" height="1.2" fill="#6c6c6c" />
<rect x="477.0" y="154" width="1.1" height="1.2" fill="#6c6c6c" />
<rect x="479.4" y="154" width="1.1" height="1.2" fill="#6c6c6c" />
<rect x="481.8" y="154" width="1.1" height="1.2" fill="#6c6c6c" />
<rect x="484.2" y="154" width="1.1" height="1.2" fill="#6c6c6c" />
<rect x="486.6" y="154" width="1.1" height="1.2" fill="#6c6c6c" />
<rect x="489.0" y="154" width="1.1" height="1.2" fill="#6c6c6c" />
<rect x="491.4" y="154" width="1.1" height="1.2" fill="#6c6c6c" />
<rect x="493.8" y="154" width="1.1" height="1.2" fill="#6c6c6c" />
<rect x="496.2" y="154" width="1.1" height="1.2" fill="#6c6c6c" />
<rect x="498.6" y="154" width="1.1" height="1.2" fill="#6c6c6c" />
<rect x="501.0" y="154" width="1.1" height="1.2" fill="#6c6c6c" />
<rect x="503.4" y="154" width="1.1" height="1.2" fill="#6c6c6c" />
<rect x="505.8" y="154" width="1.1" height="1.2" fill="#6c6c6c" />
<rect x="508.2" y="154" width="1.1" height="1.2" fill="#6c6c6c" />
<rect x="510.6" y="154" width="1.1" height="1.2" fill="#6c6c6c" />
<rect x="513.0" y="154" width="1.1" height="1.2" fill="#6c6c6c" />
<rect x="515.4" y="154" width="1.1" height="1.2" fill="#6c6c6c" />
<rect x="517.8" y="154" width="1.1" height="1.2" fill="#6c6c6c" />
<rect x="520.2" y="154" width="1.1" height="1.2" fill="#6c6c6c" />
<rect x="522.6" y="154" width="1.1" height="1.2" fill="#6c6c6c" />
<rect x="525.0" y="154" width="1.1" height="1.2" fill="#6c6c6c" />
<rect x="527.4" y="154" width="1.1" height="1.2" fill="#6c6c6c" />
<rect x="529.8" y="154" width="1.1" height="1.2" fill="#6c6c6c" />
<rect x="532.2" y="154" width="1.1" height="1.2" fill="#6c6c6c" />
<rect x="534.6" y="154" width="1.1" height="1.2" fill="#6c6c6c" />
<rect x="537.0" y="154" width="1.1" height="1.2" fill="#6c6c6c" />
<rect x="539.4" y="154" width="1.1" height="1.2" fill="#6c6c6c" />
<rect x="541.8" y="154" width="1.1" height="1.2" fill="#6c6c6c" />
<rect x="544.2" y="154" width="1.1" height="1.2" fill="#6c6c6c" />
<rect x="546.6" y="154" width="1.1" height="1.2" fill="#6c6c6c" />
<rect x="549.0" y="154" width="1.1" height="1.2" fill="#6c6c6c" />
<rect x="551.4" y="154" width="1.1" height="1.2" fill="#6c6c6c" />
<rect x="553.8" y="154" width="1.1" height="1.2" fill="#6c6c6c" />
<rect x="556.2" y="154" width="1.1" height="1.2" fill="#6c6c6c" />
<rect x="558.6" y="154" width="1.1" height="1.2" fill="#6c6c6c" />
<rect x="561.0" y="154" width="1.1" height="1.2" fill="#6c6c6c" />
<rect x="563.4" y="154" width="1.1" height="1.2" fill="#6c6c6c" />
<rect x="565.8" y="154" width="1.1" height="1.2" fill="#6c6c6c" />
<rect x="568.2" y="154" width="1.1" height="1.2" fill="#6c6c6c" />
<rect x="570.6" y="154" width="1.1" height="1.2" fill="#6c6c6c" />
<rect x="573.0" y="154" width="1.1" height="1.2" fill="#6c6c6c" />
<path d="M56.6 152.1 L59.4 154.9 M59.4 152.1 L56.6 154.9" stroke="#ececec" stroke-width="0.9"/>
<path d="M111.39999999999999 152.1 L114.2 154.9 M114.2 152.1 L111.39999999999999 154.9" stroke="#ececec" stroke-width="0.9"/>
<path d="M574.6 151.6 L577.4 154.4 M577.4 151.6 L574.6 154.4" stroke="#ececec" stroke-width="0.9"/>
<rect x="116" y="149" width="1.3" height="291" fill="#3a3a3a" />
<rect x="117" y="149" width="1.5" height="291" fill="#202020" />
<rect x="118.5" y="149" width="332.5" height="291" fill="#282828" />
<rect x="119" y="151.7" width="22.5" height="10" fill="#2e2e2e" />
<rect x="141.3" y="151.7" width="0.9" height="10" fill="#3c3c3c" />
<rect x="142.2" y="151.7" width="308.8" height="9.3" fill="#2b2b2b" />
<rect x="142.2" y="161" width="308.8" height="0.9" fill="#383838" />
<text x="124.4" y="158.6" font-size="5.1" fill="#dedede" >舞台</text>
<defs><clipPath id="cardclip"><rect x="212.5" y="187.5" width="140" height="225"/></clipPath></defs>
<g id="rocket" clip-path="url(#cardclip)"><rect x="212.5" y="187.5" width="140" height="225" fill="#4a87b9"/>
<path d="M211 325 L246 396 L214 414 L211 414 Z" fill="#d83b2a" stroke="#1f2838" stroke-width="0.8"/>
<path d="M354 325 L319 396 L351 414 L354 414 Z" fill="#d83b2a" stroke="#1f2838" stroke-width="0.8"/>
<path d="M234 391.5 L215.5 413 L252 413 Z" fill="#4a87b9" stroke="#1f2838" stroke-width="0.8"/>
<path d="M331 391.5 L349.5 413 L313 413 Z" fill="#4a87b9" stroke="#1f2838" stroke-width="0.8"/>
<defs><linearGradient id="bodyg" x1="0" y1="0" x2="1" y2="0"><stop offset="0" stop-color="#e2e3df"/><stop offset="0.6" stop-color="#ebebe8"/><stop offset="1" stop-color="#f2f2f0"/></linearGradient></defs>
<path d="M241 186 C231 203 215 236 210 285 C207 345 218 375 235 391.5 L330 391.5 C347 375 358 345 355 285 C350 236 334 203 324 186 Z" fill="url(#bodyg)" stroke="#1f2838" stroke-width="1"/>
<clipPath id="bodyclip"><path d="M241 186 C231 203 215 236 210 285 C207 345 218 375 235 391.5 L330 391.5 C347 375 358 345 355 285 C350 236 334 203 324 186 Z"/></clipPath>
<g clip-path="url(#bodyclip)">
<path d="M200 186 L365 186 L365 216 Q282.5 242 200 216 Z" fill="#d4392a" stroke="#1f2838" stroke-width="0.9"/>
<path d="M290 186 L365 186 L365 221.5 Q330 229 300 231 Q305 205 290 186 Z" fill="#e25443" opacity="0.8"/>
</g>
<path d="M241 186 C231 203 215 236 210 285 C207 345 218 375 235 391.5 L330 391.5 C347 375 358 345 355 285 C350 236 334 203 324 186 Z" fill="none" stroke="#1f2838" stroke-width="1"/>
<circle cx="231.7" cy="218.3" r="1.9" fill="#8c2c20"/>
<circle cx="243.3" cy="221.7" r="1.9" fill="#8c2c20"/>
<circle cx="321.7" cy="221.3" r="1.9" fill="#8c2c20"/>
<circle cx="333.7" cy="218.7" r="1.9" fill="#8c2c20"/>
<circle cx="282" cy="230" r="33.5" fill="#9a9a9a" stroke="#2f3540" stroke-width="1"/>
<circle cx="312.00" cy="230.00" r="1.8" fill="#4f5358"/>
<circle cx="307.98" cy="245.00" r="1.8" fill="#4f5358"/>
<circle cx="297.00" cy="255.98" r="1.8" fill="#4f5358"/>
<circle cx="282.00" cy="260.00" r="1.8" fill="#4f5358"/>
<circle cx="267.00" cy="255.98" r="1.8" fill="#4f5358"/>
<circle cx="256.02" cy="245.00" r="1.8" fill="#4f5358"/>
<circle cx="252.00" cy="230.00" r="1.8" fill="#4f5358"/>
<circle cx="256.02" cy="215.00" r="1.8" fill="#4f5358"/>
<circle cx="267.00" cy="204.02" r="1.8" fill="#4f5358"/>
<circle cx="282.00" cy="200.00" r="1.8" fill="#4f5358"/>
<circle cx="297.00" cy="204.02" r="1.8" fill="#4f5358"/>
<circle cx="307.98" cy="215.00" r="1.8" fill="#4f5358"/>
<defs><linearGradient id="glass" x1="0" y1="1" x2="1" y2="0"><stop offset="0" stop-color="#1f7a8e"/><stop offset="0.55" stop-color="#2a93a8"/><stop offset="1" stop-color="#46afc2"/></linearGradient></defs>
<circle cx="282" cy="231" r="26.5" fill="url(#glass)" stroke="#1c2a36" stroke-width="1.5"/>
<circle cx="293" cy="214.7" r="3.1" fill="#d6f0f6"/>
<text x="228.5" y="275" font-size="6.2" fill="#3a3a3a" font-style="italic">tóng</text>
<text x="253" y="275" font-size="6.2" fill="#3a3a3a" font-style="italic">nián</text>
<text x="277" y="275" font-size="6.2" fill="#3a3a3a" font-style="italic">chuān</text>
<text x="303.5" y="275" font-size="6.2" fill="#3a3a3a" font-style="italic">suō</text>
<text x="331" y="275" font-size="6.2" fill="#3a3a3a" font-style="italic">jī</text>
<rect x="223.8" y="276.3" width="20" height="18.7" fill="#f4f4f2" stroke="#a8a8a8" stroke-width="0.7"/>
<text x="233.8" y="290.3" font-size="11.2" fill="#262626" stroke="#262626" stroke-width="0.1" text-anchor="middle">童</text>
<rect x="248.8" y="276.3" width="20" height="18.7" fill="#f4f4f2" stroke="#a8a8a8" stroke-width="0.7"/>
<text x="258.8" y="290.3" font-size="11.2" fill="#262626" stroke="#262626" stroke-width="0.1" text-anchor="middle">年</text>
<rect x="273.8" y="276.3" width="20" height="18.7" fill="#f4f4f2" stroke="#a8a8a8" stroke-width="0.7"/>
<text x="283.8" y="290.3" font-size="11.2" fill="#262626" stroke="#262626" stroke-width="0.1" text-anchor="middle">穿</text>
<rect x="298.8" y="276.3" width="20" height="18.7" fill="#f4f4f2" stroke="#a8a8a8" stroke-width="0.7"/>
<text x="308.8" y="290.3" font-size="11.2" fill="#262626" stroke="#262626" stroke-width="0.1" text-anchor="middle">梭</text>
<rect x="323.8" y="276.3" width="20" height="18.7" fill="#f4f4f2" stroke="#a8a8a8" stroke-width="0.7"/>
<text x="333.8" y="290.3" font-size="11.2" fill="#262626" stroke="#262626" stroke-width="0.1" text-anchor="middle">机</text>
<rect x="222" y="297.4" width="123" height="0.7" fill="#a89896"/>
<text x="223.5" y="305.6" font-size="5" fill="#2e2626" textLength="122" lengthAdjust="spacingAndGlyphs">点击[登机]飞，去看童年的穿梭机之上“童年”穿梭机的之旅。</text>
<rect x="222" y="307.6" width="123" height="0.6" fill="#c4baba"/>
<rect x="256.2" y="311" width="52" height="16.5" rx="1.5" fill="#e8e8e6" stroke="#4a4a4a" stroke-width="0.9"/>
<circle cx="259.8" cy="314.2" r="1.6" fill="#3a3a3a"/>
<circle cx="304.6" cy="314.2" r="1.6" fill="#3a3a3a"/>
<circle cx="259.8" cy="324.2" r="1.6" fill="#3a3a3a"/>
<circle cx="304.6" cy="324.2" r="1.6" fill="#3a3a3a"/>
<text x="268.8" y="322.8" font-size="9" fill="#4a4a4a" stroke="#4a4a4a" stroke-width="0.1">登</text><text x="285" y="322.8" font-size="9" fill="#4a4a4a" stroke="#4a4a4a" stroke-width="0.1">机</text>
<path d="M237 348 C230 341 225 337 225 330.5 C225 326 228.5 324 231.3 324 C234 324 236 326 237 328 C238 326 240 324 242.7 324 C245.5 324 249 326 249 330.5 C249 337 244 341 237 348 Z" fill="#e25553"/>
<path d="M234.5 391.5 L330.5 391.5 L320.5 401.5 L245 401.5 Z" fill="#8c8c8c" stroke="#1f2838" stroke-width="0.9"/>
<circle cx="246" cy="396.5" r="1.8" fill="#4c4c4c"/>
<circle cx="258.5" cy="396.5" r="1.8" fill="#4c4c4c"/>
<circle cx="271" cy="396.5" r="1.8" fill="#4c4c4c"/>
<circle cx="294" cy="396.5" r="1.8" fill="#4c4c4c"/>
<circle cx="306" cy="396.5" r="1.8" fill="#4c4c4c"/>
<circle cx="318.5" cy="396.5" r="1.8" fill="#4c4c4c"/>
<rect x="246" y="401.5" width="68" height="11" fill="#f4d84e" stroke="#1f2838" stroke-width="0.9"/>
<rect x="246.5" y="402" width="14.5" height="10.5" fill="#f1a624"/>
<rect x="298" y="402" width="15.5" height="10.5" fill="#f1a624"/>
<path d="M283.3 332 C288.5 332 291.3 340 291.3 353 C291.3 375 287.5 400 283.3 413 C279.1 400 275.3 375 275.3 353 C275.3 340 278.1 332 283.3 332 Z" fill="#d73b2a" stroke="#1f2838" stroke-width="1"/>
<circle cx="283" cy="338" r="1.2" fill="none" stroke="#5a1a10" stroke-width="0.6"/></g>
<rect x="212" y="187" width="141" height="226" fill="none" stroke="#1b1b1b" stroke-width="1"/>
<defs><g id="rocket2"><rect x="212.5" y="187.5" width="140" height="225" fill="#f0f0f0"/>
<path d="M211 325 L246 396 L214 414 L211 414 Z" fill="#d83b2a" stroke="#1f2838" stroke-width="0.8"/>
<path d="M354 325 L319 396 L351 414 L354 414 Z" fill="#d83b2a" stroke="#1f2838" stroke-width="0.8"/>
<path d="M234 391.5 L215.5 413 L252 413 Z" fill="#f0f0f0" stroke="#1f2838" stroke-width="0.8"/>
<path d="M331 391.5 L349.5 413 L313 413 Z" fill="#f0f0f0" stroke="#1f2838" stroke-width="0.8"/>
<path d="M241 186 C231 203 215 236 210 285 C207 345 218 375 235 391.5 L330 391.5 C347 375 358 345 355 285 C350 236 334 203 324 186 Z" fill="url(#bodyg)" stroke="#1f2838" stroke-width="1"/>
<g clip-path="url(#bodyclip)">
<path d="M200 186 L365 186 L365 216 Q282.5 242 200 216 Z" fill="#d4392a" stroke="#1f2838" stroke-width="0.9"/>
<path d="M290 186 L365 186 L365 221.5 Q330 229 300 231 Q305 205 290 186 Z" fill="#e25443" opacity="0.8"/>
</g>
<path d="M241 186 C231 203 215 236 210 285 C207 345 218 375 235 391.5 L330 391.5 C347 375 358 345 355 285 C350 236 334 203 324 186 Z" fill="none" stroke="#1f2838" stroke-width="1"/>
<circle cx="231.7" cy="218.3" r="1.9" fill="#8c2c20"/>
<circle cx="243.3" cy="221.7" r="1.9" fill="#8c2c20"/>
<circle cx="321.7" cy="221.3" r="1.9" fill="#8c2c20"/>
<circle cx="333.7" cy="218.7" r="1.9" fill="#8c2c20"/>
<circle cx="282" cy="230" r="33.5" fill="#9a9a9a" stroke="#2f3540" stroke-width="1"/>
<circle cx="312.00" cy="230.00" r="1.8" fill="#4f5358"/>
<circle cx="307.98" cy="245.00" r="1.8" fill="#4f5358"/>
<circle cx="297.00" cy="255.98" r="1.8" fill="#4f5358"/>
<circle cx="282.00" cy="260.00" r="1.8" fill="#4f5358"/>
<circle cx="267.00" cy="255.98" r="1.8" fill="#4f5358"/>
<circle cx="256.02" cy="245.00" r="1.8" fill="#4f5358"/>
<circle cx="252.00" cy="230.00" r="1.8" fill="#4f5358"/>
<circle cx="256.02" cy="215.00" r="1.8" fill="#4f5358"/>
<circle cx="267.00" cy="204.02" r="1.8" fill="#4f5358"/>
<circle cx="282.00" cy="200.00" r="1.8" fill="#4f5358"/>
<circle cx="297.00" cy="204.02" r="1.8" fill="#4f5358"/>
<circle cx="307.98" cy="215.00" r="1.8" fill="#4f5358"/>
<circle cx="282" cy="231" r="26.5" fill="url(#glass)" stroke="#1c2a36" stroke-width="1.5"/>
<circle cx="293" cy="214.7" r="3.1" fill="#d6f0f6"/>
<text x="228.5" y="275" font-size="6.2" fill="#3a3a3a" font-style="italic">tóng</text>
<text x="253" y="275" font-size="6.2" fill="#3a3a3a" font-style="italic">nián</text>
<text x="277" y="275" font-size="6.2" fill="#3a3a3a" font-style="italic">chuān</text>
<text x="303.5" y="275" font-size="6.2" fill="#3a3a3a" font-style="italic">suō</text>
<text x="331" y="275" font-size="6.2" fill="#3a3a3a" font-style="italic">jī</text>
<rect x="223.8" y="276.3" width="20" height="18.7" fill="#f4f4f2" stroke="#a8a8a8" stroke-width="0.7"/>
<text x="233.8" y="290.3" font-size="11.2" fill="#262626" stroke="#262626" stroke-width="0.1" text-anchor="middle">童</text>
<rect x="248.8" y="276.3" width="20" height="18.7" fill="#f4f4f2" stroke="#a8a8a8" stroke-width="0.7"/>
<text x="258.8" y="290.3" font-size="11.2" fill="#262626" stroke="#262626" stroke-width="0.1" text-anchor="middle">年</text>
<rect x="273.8" y="276.3" width="20" height="18.7" fill="#f4f4f2" stroke="#a8a8a8" stroke-width="0.7"/>
<text x="283.8" y="290.3" font-size="11.2" fill="#262626" stroke="#262626" stroke-width="0.1" text-anchor="middle">穿</text>
<rect x="298.8" y="276.3" width="20" height="18.7" fill="#f4f4f2" stroke="#a8a8a8" stroke-width="0.7"/>
<text x="308.8" y="290.3" font-size="11.2" fill="#262626" stroke="#262626" stroke-width="0.1" text-anchor="middle">梭</text>
<rect x="323.8" y="276.3" width="20" height="18.7" fill="#f4f4f2" stroke="#a8a8a8" stroke-width="0.7"/>
<text x="333.8" y="290.3" font-size="11.2" fill="#262626" stroke="#262626" stroke-width="0.1" text-anchor="middle">机</text>
<rect x="222" y="297.4" width="123" height="0.7" fill="#a89896"/>
<text x="223.5" y="305.6" font-size="5" fill="#2e2626" textLength="122" lengthAdjust="spacingAndGlyphs">点击[登机]飞，去看童年的穿梭机之上“童年”穿梭机的之旅。</text>
<rect x="222" y="307.6" width="123" height="0.6" fill="#c4baba"/>
<rect x="256.2" y="311" width="52" height="16.5" rx="1.5" fill="#e8e8e6" stroke="#4a4a4a" stroke-width="0.9"/>
<circle cx="259.8" cy="314.2" r="1.6" fill="#3a3a3a"/>
<circle cx="304.6" cy="314.2" r="1.6" fill="#3a3a3a"/>
<circle cx="259.8" cy="324.2" r="1.6" fill="#3a3a3a"/>
<circle cx="304.6" cy="324.2" r="1.6" fill="#3a3a3a"/>
<text x="268.8" y="322.8" font-size="9" fill="#4a4a4a" stroke="#4a4a4a" stroke-width="0.1">登</text><text x="285" y="322.8" font-size="9" fill="#4a4a4a" stroke="#4a4a4a" stroke-width="0.1">机</text>
<path d="M237 348 C230 341 225 337 225 330.5 C225 326 228.5 324 231.3 324 C234 324 236 326 237 328 C238 326 240 324 242.7 324 C245.5 324 249 326 249 330.5 C249 337 244 341 237 348 Z" fill="#e25553"/>
<path d="M234.5 391.5 L330.5 391.5 L320.5 401.5 L245 401.5 Z" fill="#8c8c8c" stroke="#1f2838" stroke-width="0.9"/>
<circle cx="246" cy="396.5" r="1.8" fill="#4c4c4c"/>
<circle cx="258.5" cy="396.5" r="1.8" fill="#4c4c4c"/>
<circle cx="271" cy="396.5" r="1.8" fill="#4c4c4c"/>
<circle cx="294" cy="396.5" r="1.8" fill="#4c4c4c"/>
<circle cx="306" cy="396.5" r="1.8" fill="#4c4c4c"/>
<circle cx="318.5" cy="396.5" r="1.8" fill="#4c4c4c"/>
<rect x="246" y="401.5" width="68" height="11" fill="#f4d84e" stroke="#1f2838" stroke-width="0.9"/>
<rect x="246.5" y="402" width="14.5" height="10.5" fill="#f1a624"/>
<rect x="298" y="402" width="15.5" height="10.5" fill="#f1a624"/>
<path d="M283.3 332 C288.5 332 291.3 340 291.3 353 C291.3 375 287.5 400 283.3 413 C279.1 400 275.3 375 275.3 353 C275.3 340 278.1 332 283.3 332 Z" fill="#d73b2a" stroke="#1f2838" stroke-width="1"/>
<circle cx="283" cy="338" r="1.2" fill="none" stroke="#5a1a10" stroke-width="0.6"/></g></defs>
<rect x="20.5" y="164" width="39.5" height="9" fill="#585858" />
<path d="M24.5 167 L28.7 167 L26.6 170.3 Z" fill="#e6e6e6"/>
<text x="31" y="171" font-size="5.6" fill="#dcdcdc" >选择</text>
<rect x="20.5" y="215.5" width="39.5" height="9" fill="#585858" />
<path d="M24.5 218.5 L28.7 218.5 L26.6 221.8 Z" fill="#e6e6e6"/>
<text x="31" y="222.5" font-size="5.6" fill="#dcdcdc" >元素</text>
<rect x="20.5" y="359" width="39.5" height="9" fill="#585858" />
<path d="M24.5 362 L28.7 362 L26.6 365.3 Z" fill="#e6e6e6"/>
<text x="31" y="366" font-size="5.6" fill="#dcdcdc" >绘制</text>
<rect x="23.3" y="178.5" width="13.5" height="13" fill="#393939" />
<path d="M27.5 181 L27.5 189.5 L29.6 187.6 L31.2 190.6 L32.6 189.9 L31.1 187 L34 186.8 Z" fill="#f0f0f0"/>
<path d="M43.5 188.5 Q43 182 47 181.5 Q51 181.5 51 186 M45.5 186.5 L47 183 M43 189 L44.5 188" fill="none" stroke="#d8d8d8" stroke-width="1"/>
<rect x="25.6" y="196.2" width="1.5" height="1.5" fill="#d8d8d8" />
<rect x="25.6" y="198.79999999999998" width="1.5" height="1.5" fill="#d8d8d8" />
<rect x="25.6" y="201.39999999999998" width="1.5" height="1.5" fill="#d8d8d8" />
<rect x="25.6" y="204.0" width="1.5" height="1.5" fill="#d8d8d8" />
<rect x="28.200000000000003" y="196.2" width="1.5" height="1.5" fill="#d8d8d8" />
<rect x="28.200000000000003" y="198.79999999999998" width="1.5" height="1.5" fill="#d8d8d8" />
<rect x="28.200000000000003" y="204.0" width="1.5" height="1.5" fill="#d8d8d8" />
<rect x="30.8" y="196.2" width="1.5" height="1.5" fill="#d8d8d8" />
<rect x="30.8" y="204.0" width="1.5" height="1.5" fill="#d8d8d8" />
<rect x="33.400000000000006" y="196.2" width="1.5" height="1.5" fill="#d8d8d8" />
<rect x="33.400000000000006" y="198.79999999999998" width="1.5" height="1.5" fill="#d8d8d8" />
<rect x="33.400000000000006" y="201.39999999999998" width="1.5" height="1.5" fill="#d8d8d8" />
<rect x="33.400000000000006" y="204.0" width="1.5" height="1.5" fill="#d8d8d8" />
<rect x="25.3" y="232" width="2.4" height="2.2" fill="#d8d8d8" />
<rect x="25.3" y="235" width="2.4" height="2.2" fill="#d8d8d8" />
<rect x="25.3" y="238" width="2.4" height="2.2" fill="#d8d8d8" />
<rect x="28.6" y="232" width="2.4" height="2.2" fill="#d8d8d8" />
<rect x="28.6" y="235" width="2.4" height="2.2" fill="#d8d8d8" />
<rect x="28.6" y="238" width="2.4" height="2.2" fill="#d8d8d8" />
<rect x="31.9" y="232" width="2.4" height="2.2" fill="#d8d8d8" />
<rect x="31.9" y="235" width="2.4" height="2.2" fill="#d8d8d8" />
<rect x="31.9" y="238" width="2.4" height="2.2" fill="#d8d8d8" />
<rect x="42.5" y="232.3" width="8.5" height="7.8" fill="none" stroke="#d8d8d8" stroke-width="1"/><path d="M43 240 L45.5 236.5 L47.5 238.5 L49 237 L51 240 Z" fill="#d8d8d8"/>
<path d="M25.5 250.5 h2 l3 -2.5 v8 l-3 -2.5 h-2 Z" fill="#d8d8d8"/><path d="M32.3 250 Q33.5 252 32.3 254.2" fill="none" stroke="#d8d8d8" stroke-width="0.9"/>
<circle cx="47" cy="252.2" r="4.2" fill="none" stroke="#d8d8d8" stroke-width="1.1"/><circle cx="47" cy="250.3" r="0.9" fill="#d8d8d8"/><circle cx="47" cy="254.1" r="0.9" fill="#d8d8d8"/><circle cx="45.1" cy="252.2" r="0.9" fill="#d8d8d8"/><circle cx="48.9" cy="252.2" r="0.9" fill="#d8d8d8"/>
<path d="M26.8 263 h6.5 v1.6 h-2.4 v6.8 h-1.7 v-6.8 h-2.4 Z" fill="#d8d8d8"/>
<rect x="42.8" y="263" width="8.5" height="8" fill="none" stroke="#d8d8d8" stroke-width="1"/><path d="M44.3 266.5 L46.5 269 L51.5 263.2" fill="none" stroke="#d8d8d8" stroke-width="1.3"/>
<circle cx="30" cy="282.5" r="3.6" fill="none" stroke="#d8d8d8" stroke-width="1.3"/><rect x="29.3" y="277.5" width="1.4" height="1.4" fill="#d8d8d8"/><path d="M30 282.5 L31.5 281" stroke="#d8d8d8" stroke-width="0.9"/>
<circle cx="47.2" cy="282" r="4.2" fill="#d8d8d8"/><path d="M43.5 282 H51 M47.2 278 V286" stroke="#8a8a8a" stroke-width="0.6"/>
<circle cx="30.2" cy="298" r="4.2" fill="#d8d8d8"/><path d="M28 295 Q31 297 29 300 M31.5 294.5 Q33 298 32 301" fill="none" stroke="#808080" stroke-width="0.7"/>
<rect x="42.8" y="294" width="8.5" height="6" fill="none" stroke="#d8d8d8" stroke-width="1.1"/><path d="M45 300 L44 302.5 M49 300 L50 302.5" stroke="#d8d8d8" stroke-width="0.9"/>
<path d="M25.3 310.5 h10 v6.5 h-10 Z" fill="none" stroke="#d8d8d8" stroke-width="1.1"/><path d="M27 313.5 h2.5 v2 h-2.5 Z M31 311 L34 308.8" fill="#d8d8d8" stroke="#d8d8d8" stroke-width="0.7"/>
<rect x="42.5" y="309" width="9" height="8" fill="none" stroke="#d8d8d8" stroke-width="1"/><path d="M44 315 L46 312.5 L47.5 314.5 L50 311.5" fill="none" stroke="#d8d8d8" stroke-width="0.7"/>
<path d="M25 327 h5 q3 0 3.5 2 h2 v3 q-1 1.5 -4 1.5 h-6.5 Z" fill="#d8d8d8"/><path d="M26 329.5 h5" stroke="#666" stroke-width="0.7"/>
<path d="M47.2 333.5 C44 331 42.5 329 42.5 327 C42.5 325 44 324 45.3 324 C46.3 324 47 324.8 47.2 325.5 C47.4 324.8 48.1 324 49.1 324 C50.4 324 51.9 325 51.9 327 C51.9 329 50.4 331 47.2 333.5 Z" fill="none" stroke="#d8d8d8" stroke-width="1.1"/>
<path d="M26 339.5 L29 339 L33.5 347.5 L32 349 Z" fill="#d8d8d8"/>
<path d="M42.5 338.8 V348.8 H52" fill="none" stroke="#d8d8d8" stroke-width="1"/><path d="M43.5 347 L46 343 L48 345 L51.5 340.5" fill="none" stroke="#d8d8d8" stroke-width="0.9"/>
<path d="M26 384 L33.5 376.5" stroke="#d8d8d8" stroke-width="1.3"/>
<path d="M43 384 Q43.5 377 47 376.5 Q50 376.5 51 379.5 M50 378 L51.3 380.5 L52.5 378.5" fill="none" stroke="#d8d8d8" stroke-width="1.1"/>
<rect x="26" y="391.5" width="8" height="8" fill="#d8d8d8" />
<rect x="43" y="391.5" width="8.5" height="8.5" rx="2" fill="#d8d8d8"/>
<circle cx="30" cy="411" r="4.3" fill="#d8d8d8"/>
<path d="M47.3 406.5 L51.6 409.7 L50 414.5 L44.6 414.5 L43 409.7 Z" fill="#d8d8d8"/>
<rect x="72.3" y="161.3" width="38.2" height="60.5" fill="#5e92c0" />
<svg x="73.8" y="162.8" width="35.2" height="57.5" viewBox="212.5 187.5 140 225" preserveAspectRatio="none"><use href="#rocket"/></svg>
<text x="68.5" y="218.5" font-size="6" fill="#e0e0e0" >1</text>
<path d="M78.8 234.5 H86.5 M82.65 230.6 V238.4" stroke="#e6e6e6" stroke-width="1.3"/>
<rect x="96.9" y="233.6" width="1.9" height="1.9" fill="#e6e6e6" />
<rect x="99.80000000000001" y="233.6" width="1.9" height="1.9" fill="#e6e6e6" />
<rect x="102.7" y="233.6" width="1.9" height="1.9" fill="#e6e6e6" />
<rect x="448.5" y="161.5" width="2.5" height="278.5" fill="#232323" />
<rect x="451" y="157" width="1.6" height="283" fill="#4a4a4a" />
<rect x="452.6" y="157.3" width="24.899999999999977" height="9.7" fill="#555555" />
<text x="459.8" y="164.6" font-size="5.1" fill="#d0d0d0" >属性</text>
<rect x="478.5" y="157.3" width="23.5" height="9.7" fill="#3b3b3b" />
<text x="485.7" y="164.6" font-size="5.1" fill="#d0d0d0" >元件</text>
<rect x="503" y="157.3" width="24" height="9.7" fill="#3b3b3b" />
<text x="510.2" y="164.6" font-size="5.1" fill="#d0d0d0" >翻页</text>
<rect x="528" y="157.3" width="24" height="9.7" fill="#3b3b3b" />
<text x="535.2" y="164.6" font-size="5.1" fill="#d0d0d0" >分享</text>
<rect x="553" y="157.3" width="25" height="9.7" fill="#3b3b3b" />
<text x="560.2" y="164.6" font-size="5.1" fill="#d0d0d0" >加载</text>
<rect x="578" y="157.3" width="2" height="9.7" fill="#3b3b3b" />
<rect x="456.7" y="178.3" width="21.3" height="21.7" fill="#f2f2f2" />
<svg x="456.7" y="178.3" width="21.3" height="21.7" viewBox="212.5 187.5 140 225" preserveAspectRatio="none"><use href="#rocket2"/></svg>
<text x="482.5" y="185" font-size="5.6" fill="#dcdcdc" >舞台</text>
<rect x="504" y="179" width="23.5" height="23.5" fill="#8a2a22" />
<svg x="505" y="180" width="21.5" height="21.5" viewBox="212.5 187.5 140 225" preserveAspectRatio="none"><use href="#rocket2"/></svg>
<circle cx="525.5" cy="180.5" r="2.4" fill="#d97a40"/>
<rect x="528.5" y="185.8" width="18.3" height="7.6" fill="#e9e9e9" stroke="#333" stroke-width="0.6"/>
<text x="531.2" y="191.7" font-size="5.6" fill="#222" >图像</text>
<text x="456.7" y="215.8" font-size="5.8" fill="#e2e2e2" stroke="#e2e2e2" stroke-width="0.12">宽:</text>
<rect x="474" y="208.3" width="31.3" height="8" fill="#474747" />
<text x="475.8" y="215" font-size="6.3" fill="#e0e0e0" >320</text>
<text x="507.5" y="215.5" font-size="5.4" fill="#e2e2e2" stroke="#e2e2e2" stroke-width="0.12">像素</text>
<text x="456.7" y="229.5" font-size="5.8" fill="#e2e2e2" stroke="#e2e2e2" stroke-width="0.12">高:</text>
<rect x="474" y="222.5" width="31.3" height="7.8" fill="#474747" />
<text x="475.8" y="229.2" font-size="6.3" fill="#e0e0e0" >520</text>
<text x="507.5" y="229.5" font-size="5.4" fill="#e2e2e2" stroke="#e2e2e2" stroke-width="0.12">像素</text>
<g transform="translate(529.9 212.6) rotate(-42)"><rect x="-4.6" y="-1.9" width="9.2" height="3.8" rx="1.9" fill="#d6d6d6"/><rect x="-3.1" y="-0.6" width="2.4" height="1.2" rx="0.6" fill="#555"/><rect x="0.7" y="-0.6" width="2.4" height="1.2" rx="0.6" fill="#555"/></g>
<g transform="translate(529.9 225.8) rotate(-42)"><rect x="-4.6" y="-1.9" width="9.2" height="3.8" rx="1.9" fill="#d6d6d6"/><rect x="-3.1" y="-0.6" width="2.4" height="1.2" rx="0.6" fill="#555"/><rect x="0.7" y="-0.6" width="2.4" height="1.2" rx="0.6" fill="#555"/></g>
<path d="M456.5 238.2 H459.5 M458 236.7 V239.7" stroke="#d6d6d6" stroke-width="0.6"/>
<text x="463.3" y="240.3" font-size="5.6" fill="#e2e2e2" stroke="#e2e2e2" stroke-width="0.12">X:-214</text>
<text x="485.8" y="240.3" font-size="5.6" fill="#e2e2e2" stroke="#e2e2e2" stroke-width="0.12">Y:417</text>
<rect x="452.6" y="244.5" width="111" height="0.6" fill="#626262" />
<text x="456.5" y="264" font-size="5.6" fill="#e2e2e2" stroke="#e2e2e2" stroke-width="0.12">帧速:</text>
<rect x="492.2" y="257.8" width="18.8" height="7.5" fill="#393939" />
<text x="494.5" y="264.2" font-size="6.3" fill="#e6e6e6" >12</text>
<text x="513.3" y="263.8" font-size="5.4" fill="#e2e2e2" stroke="#e2e2e2" stroke-width="0.12">帧/秒</text>
<text x="456.5" y="277.3" font-size="5.6" fill="#e2e2e2" stroke="#e2e2e2" stroke-width="0.12">填充:</text>
<path d="M492.5 275.5 L495.5 271.8 L498.5 275.3 L495.8 278 Z" fill="#dcdcdc"/>
<rect x="501" y="271.4" width="7" height="6.5" fill="#f2f2f2" />
<text x="456.5" y="290" font-size="5.4" fill="#e2e2e2" stroke="#e2e2e2" stroke-width="0.12">切换方式:</text>
<rect x="491.6" y="283.7" width="40.3" height="7.6" fill="#3b3b3b" />
<text x="494.3" y="290" font-size="5.6" fill="#e0e0e0" >无</text>
<path d="M526.5 286.5 L529.5 286.5 L528 288.7 Z" fill="#e0e0e0"/>
<text x="456.5" y="303.3" font-size="5.4" fill="#e2e2e2" stroke="#e2e2e2" stroke-width="0.12">声音图片:</text>
<rect x="491.8" y="297.5" width="20.7" height="20.5" fill="#e6e6e6" />
<path d="M499.6 307.8 H504.8 M502.2 305.2 V310.4" stroke="#2a2a2a" stroke-width="1.6"/>
<text x="456.5" y="328.3" font-size="5.4" fill="#e2e2e2" stroke="#e2e2e2" stroke-width="0.12">静音图片:</text>
<rect x="491.8" y="323" width="20.7" height="20.7" fill="#e6e6e6" />
<path d="M499.6 333.4 H504.8 M502.2 330.8 V336" stroke="#2a2a2a" stroke-width="1.6"/>
<text x="456.5" y="355.5" font-size="5.4" fill="#e2e2e2" stroke="#e2e2e2" stroke-width="0.12">背景音乐:</text>
<rect x="491.6" y="349.5" width="40.3" height="8" fill="#3b3b3b" />
<path d="M526.5 352.8 L529.5 352.8 L527.9 355 Z" fill="#e0e0e0"/>
<rect x="533.8" y="350.5" width="16.2" height="6.5" fill="#e8e8e8" />
<text x="536.6" y="356" font-size="5.2" fill="#1a1a1a" stroke="#1a1a1a" stroke-width="0.2">上传</text>
</svg>
<div class="lbl" style="left:10px;top:10px;width:125px;height:30px;padding:0.5px 0 0 9.5px">TG: MYYJJPP</div>
<div class="lbl" style="left:417px;top:440px;width:173px;height:30px;padding:0 0 0 10px;font-size:17.1px;letter-spacing:0;line-height:29.2px">www.glo−12bet.com</div>
</body></html>
